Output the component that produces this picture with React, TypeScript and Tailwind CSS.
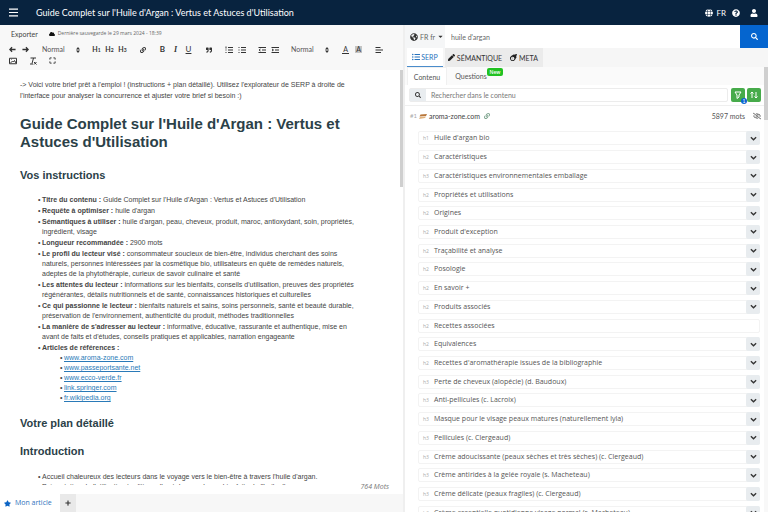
import { useState } from 'react';
import type { ReactNode } from 'react';
import {
  FaGlobe, FaQuestionCircle, FaUser, FaSearch, FaCloud, FaGlobeAmericas, FaCaretDown, FaListUl,
  FaPen, FaMeteor, FaStar, FaPlus, FaLink, FaQuoteRight, FaRegEyeSlash,
} from 'react-icons/fa';

const instructions = [
  ['Titre du contenu :', "Guide Complet sur l'Huile d'Argan : Vertus et Astuces d'Utilisation"],
  ['Requête à optimiser :', "huile d'argan"],
  ['Sémantiques à utiliser :', "huile d'argan, peau, cheveux, produit, maroc, antioxydant, soin, propriétés, ingrédient, visage"],
  ['Longueur recommandée :', '2900 mots'],
  ['Le profil du lecteur visé :', 'consommateur soucieux de bien-être, individus cherchant des soins naturels, personnes intéressées par la cosmétique bio, utilisateurs en quête de remèdes naturels, adeptes de la phytothérapie, curieux de savoir culinaire et santé'],
  ['Les attentes du lecteur :', "informations sur les bienfaits, conseils d'utilisation, preuves des propriétés régénérantes, détails nutritionnels et de santé, connaissances historiques et culturelles"],
  ['Ce qui passionne le lecteur :', "bienfaits naturels et sains, soins personnels, santé et beauté durable, préservation de l'environnement, authenticité du produit, méthodes traditionnelles"],
  ["La manière de s'adresser au lecteur :", "informative, éducative, rassurante et authentique, mise en avant de faits et d'études, conseils pratiques et applicables, narration engageante"],
];

const references = ['www.aroma-zone.com', 'www.passeportsante.net', 'www.ecco-verde.fr', 'link.springer.com', 'fr.wikipedia.org'];

const headings = [
  { level: 'h1', text: "Huile d'argan bio" },
  { level: 'h2', text: 'Caractéristiques' },
  { level: 'h3', text: 'Caractéristiques environnementales emballage' },
  { level: 'h2', text: 'Propriétés et utilisations' },
  { level: 'h2', text: 'Origines' },
  { level: 'h2', text: "Produit d'exception" },
  { level: 'h2', text: 'Traçabilité et analyse' },
  { level: 'h2', text: 'Posologie' },
  { level: 'h2', text: 'En savoir +' },
  { level: 'h2', text: 'Produits associés' },
  { level: 'h2', text: 'Recettes associées', leaf: true },
  { level: 'h2', text: 'Equivalences' },
  { level: 'h2', text: "Recettes d'aromathérapie issues de la bibliographie" },
  { level: 'h3', text: 'Perte de cheveux (alopécie) (d. Baudoux)' },
  { level: 'h3', text: 'Anti-pellicules (c. Lacroix)' },
  { level: 'h3', text: 'Masque pour le visage peaux matures (naturellement lyla)' },
  { level: 'h3', text: 'Pellicules (c. Clergeaud)' },
  { level: 'h3', text: 'Crème adoucissante (peaux sèches et très sèches) (c. Clergeaud)' },
  { level: 'h3', text: 'Crème antirides à la gelée royale (s. Macheteau)' },
  { level: 'h3', text: 'Crème délicate (peaux fragiles) (c. Clergeaud)' },
  { level: 'h3', text: 'Crème essentielle quotidienne visage normal (s. Macheteau)' },
];

// stroke icons on a 16 unit grid
function Glyph({ d, size = 'w-2 h-2', width = 2 }: { d: string; size?: string; width?: number }) {
  return (
    <svg viewBox="0 0 16 16" className={size} fill="none" stroke="currentColor" strokeWidth={width}>
      <path d={d} />
    </svg>
  );
}

function Tool({ label, children }: { label: string; children: ReactNode }) {
  return (
    <button aria-label={label} className="w-[13px] h-[11px] flex items-center justify-center">{children}</button>
  );
}

function SizePicker({ label }: { label: string }) {
  return (
    <div className="relative flex items-center w-11 h-[11px] pl-[3px]">
      <select aria-label={label} className="appearance-none w-full bg-transparent text-[7px] leading-[11px] text-[#555] outline-none">
        <option>Normal</option>
      </select>
      <svg viewBox="0 0 6 8" className="absolute right-0.5 w-1.5 h-2 pointer-events-none" fill="currentColor">
        <path d="M3 1 5 3.4H1ZM3 7 5 4.6H1Z" />
      </svg>
    </div>
  );
}

function Toolbar() {
  return (
    <div className="flex flex-wrap items-center gap-x-[7px] pl-1.5 text-[#333]">
      <div className="flex">
        <Tool label="Annuler"><Glyph d="M15 8H2M7 3 2 8l5 5" width={3} size="w-[7px] h-[7px]" /></Tool>
        <Tool label="Rétablir"><Glyph d="M1 8h13M9 3l5 5-5 5" width={3} size="w-[7px] h-[7px]" /></Tool>
      </div>
      <SizePicker label="Style" />
      <div className="flex">
        {['1', '2', '3'].map(n => (
          <Tool key={n} label={`Titre ${n}`}>
            <span className="text-[7px] font-bold">H<span className="text-[5px]">{n}</span></span>
          </Tool>
        ))}
      </div>
      <Tool label="Lien"><FaLink size={6} /></Tool>
      <div className="flex text-[8px] leading-[9px]">
        <Tool label="Gras"><b>B</b></Tool>
        <Tool label="Italique"><i className="font-['Liberation_Serif',serif] font-bold">I</i></Tool>
        <Tool label="Souligné"><u>U</u></Tool>
      </div>
      <Tool label="Citation"><FaQuoteRight size={6} /></Tool>
      <div className="flex">
        <Tool label="Liste numérotée"><Glyph d="M6 3h10M6 8h10M6 13h10M2 1v4M1 8h2M1 13h2" /></Tool>
        <Tool label="Liste à puces"><Glyph d="M6 3h10M6 8h10M6 13h10M1 3h2M1 8h2M1 13h2" /></Tool>
      </div>
      <div className="flex">
        <Tool label="Désindenter"><Glyph d="M1 3h15M8 8h8M1 13h15M5 6 2 8l3 2" /></Tool>
        <Tool label="Indenter"><Glyph d="M1 3h15M8 8h8M1 13h15M2 6l3 2-3 2" /></Tool>
      </div>
      <SizePicker label="Taille" />
      <div className="flex text-[7px] leading-[7px]">
        <Tool label="Couleur du texte"><span className="border-b border-[#333] px-px">A</span></Tool>
        <Tool label="Surlignage"><span className="bg-[#c4c4c4] px-px">A</span></Tool>
      </div>
      <Tool label="Alignement"><Glyph d="M1 3h10M1 8h15M1 13h11" /></Tool>
      <Tool label="Image"><Glyph d="M1 2.5h14v11H1zM3 12l4-4 2 2 2-3 3 5M5 5v1" /></Tool>
      <Tool label="Effacer le format"><Glyph d="M3 2h11M9 2 6 13M2 14h6M10 10l5 5M15 10l-5 5" /></Tool>
      <Tool label="Plein écran"><Glyph d="M2 6V2h4M10 2h4v4M14 10v4h-4M6 14H2v-4" size="w-[7px] h-[7px]" /></Tool>
    </div>
  );
}

function Editor() {
  return (
    <section className="flex flex-col min-h-0 min-w-0 bg-white border-r-2 border-[#efefef]">
      <div className="h-[45px] shrink-0 bg-[#f8f8f8] pt-[3px]">
        <div className="flex items-center gap-[11px] pl-[11px] h-3 mb-1">
          <button className="text-[7px] text-[#444]">Exporter</button>
          <p className="flex items-center gap-[3px] font-['Open_Sans',sans-serif] text-[5px] text-[#666]">
            <FaCloud size={6} color="#111" />Dernière sauvegarde le 29 mars 2024 - 18:39
          </p>
        </div>
        <Toolbar />
      </div>

      <div className="relative flex flex-1 min-h-0 pb-[9px]">
        <article className="flex-1 overflow-hidden pl-5 pr-8 pt-[9px] font-['Liberation_Sans',sans-serif] text-[7px] leading-[10px] text-[#444]">
          <p className="leading-[11px]">-&gt; Voici votre brief prêt à l'emploi ! (instructions + plan détaillé). Utilisez l'explorateur de SERP à droite de l'interface pour analyser la concurrence et ajuster votre brief si besoin :)</p>
          <h1 className="text-[15px] leading-[18px] font-bold text-[#2b4148] mt-3.5">Guide Complet sur l'Huile d'Argan : Vertus et Astuces d'Utilisation</h1>
          <h2 className="text-[11px] leading-4 font-bold text-[#2b4148] mt-4">Vos instructions</h2>
          <ul className="mt-3 pl-[22px] pr-1 space-y-px">
            {instructions.map(([title, text]) => (
              <li key={title} className="before:content-['•'] before:-ml-1 before:inline-block before:w-1"><b>{title}</b> {text}</li>
            ))}
            <li className="before:content-['•'] before:-ml-1 before:inline-block before:w-1">
              <b>Articles de références :</b>
              <ul className="pl-[22px]">
                {references.map(site => (
                  <li key={site} className="before:content-['•'] before:-ml-1 before:inline-block before:w-1">
                    <a href={`https://${site}`} className="text-[#2a7ab8] underline">{site}</a>
                  </li>
                ))}
              </ul>
            </li>
          </ul>
          <h2 className="text-[11px] leading-4 font-bold text-[#2b4148] mt-3">Votre plan détaillé</h2>
          <h2 className="text-[11px] leading-4 font-bold text-[#2b4148] mt-3">Introduction</h2>
          <ul className="mt-[13px] pl-[22px]">
            <li className="before:content-['•'] before:-ml-1 before:inline-block before:w-1">Accueil chaleureux des lecteurs dans le voyage vers le bien-être à travers l'huile d'argan.</li>
            <li className="before:content-['•'] before:-ml-1 before:inline-block before:w-1">Présentation de l'utilisation traditionnelle et des nombreux bienfaits de l'huile d'argan.</li>
          </ul>
        </article>
        <div className="w-[3px] h-[117px] bg-[#cfcfcf]" />
        <p className="absolute right-3.5 bottom-0.5 font-['Open_Sans',sans-serif] italic text-[7px] leading-[10px] text-[#777]">764 Mots</p>
      </div>

      <footer className="h-[18px] shrink-0 flex bg-[#f7f7f7] font-['Open_Sans',sans-serif] text-[7px]">
        <button className="flex items-center gap-1 pl-1 pr-2 bg-white text-[#2f74bd]">
          <FaStar size={7} color="#0a63c4" />Mon article
        </button>
        <button aria-label="Ajouter" className="w-4 flex items-center justify-center bg-[#e9e9e9] text-[#333]"><FaPlus size={6} /></button>
      </footer>
    </section>
  );
}

function Results() {
  const [query, setQuery] = useState("huile d'argan");
  const [filter, setFilter] = useState('');

  return (
    <section className="flex flex-col min-h-0 min-w-0 text-[7px] leading-[10px]">
      {/* Search bar */}
      <div className="flex h-[23px] shrink-0">
        <button className="w-10 flex items-center pl-[5px] gap-0.5 bg-[#f5f6f7] text-[#666]">
          <FaGlobeAmericas size={8} color="#333" />
          <span>FR fr</span>
          <FaCaretDown size={7} color="#333" />
        </button>
        <input
          aria-label="Requête" value={query} onChange={e => setQuery(e.target.value)}
          className="flex-1 min-w-0 pl-1.5 text-[#666] outline-none"
        />
        <button aria-label="Rechercher" className="w-7 flex items-center justify-center bg-[#0565cf] text-white"><FaSearch size={7} /></button>
      </div>

      {/* Tabs */}
      <nav className="flex h-[19px] shrink-0 pl-0.5 bg-[#f6f6f6] text-[#333]">
        <button className="w-9 flex items-center justify-center gap-px bg-white border-b border-[#4a8ccb] text-[#2672bd]"><FaListUl size={8} />SERP</button>
        <button className="w-[60px] flex items-center justify-center gap-0.5 bg-[#ebebeb] ml-0.5"><FaPen size={7} color="#222" />SÉMANTIQUE</button>
        <button className="w-[38px] flex items-center justify-center gap-0.5 bg-[#ebebeb]"><FaMeteor size={7} color="#222" />META</button>
      </nav>

      <div className="flex flex-1 min-h-0">
        <div className="flex flex-1 min-w-0 flex-col overflow-hidden">
          <div className="flex h-[18px] shrink-0 pl-0.5 bg-[#fafafa] text-[#555]">
            <button className="w-10 bg-white border-x border-t border-[#f0f0f0]">Contenu</button>
            <button className="relative w-12">
              Questions
              <span className="absolute left-10 top-px w-4 h-2 rounded-xs bg-[#21c121] font-['Open_Sans',sans-serif] text-[5px] leading-2 font-semibold text-white">New</span>
            </button>
          </div>

          <div className="flex h-[21px] shrink-0 items-center gap-0.5 pl-1 pr-[3px] border-b border-[#efefef]">
            <div className="flex flex-1 min-w-0 h-3.5 mr-px border border-[#ececec] rounded-xs">
              <span className="w-4 flex items-center justify-center bg-[#e9edf0] text-[#333]"><FaSearch size={6} /></span>
              <input
                aria-label="Rechercher dans le contenu" placeholder="Rechercher dans le contenu" value={filter}
                onChange={e => setFilter(e.target.value)}
                className="flex-1 min-w-0 pl-[5px] outline-none placeholder:text-[#777]"
              />
            </div>
            <button aria-label="Filtrer" className="relative w-3.5 h-3.5 flex items-center justify-center rounded-xs bg-[#47ab4b] text-white">
              <Glyph d="M2 2h12L10 8v4l-4 3V8Z" />
              <span className="absolute -right-0.5 -bottom-0.5 w-1.5 h-1.5 rounded-full bg-[#0a63d0] text-[5px] leading-[6px]">1</span>
            </button>
            <button aria-label="Trier" className="w-3.5 h-3.5 flex items-center justify-center rounded-xs bg-[#47ab4b] text-white">
              <Glyph d="M4 14V2M1 5l3-3 3 3M12 2v12M9 11l3 3 3-3" />
            </button>
          </div>

          <div className="flex h-5 shrink-0 items-center pl-[5px] pr-[3px] text-[#444]">
            <span className="w-[9px] text-[6px] text-[#aaa]">#1</span>
            <svg viewBox="0 0 16 10" className="w-2 h-[5px] mr-0.5">
              <path d="M3 1 16 0 14 4 1 5Z" fill="#b8763a" />
              <path d="M2 6 14 5 12 8 0 10Z" fill="#e0b27d" />
            </svg>
            <a href="https://www.aroma-zone.com">aroma-zone.com</a>
            <FaLink size={6} color="#7ea58f" className="ml-1" />
            <span className="ml-auto mr-2 text-[#555]">5897 mots</span>
            <button aria-label="Masquer"><FaRegEyeSlash size={8} /></button>
          </div>

          <ul className="flex flex-1 flex-col pt-[3px] pl-[13px] pr-1 -mb-2.5 font-['Open_Sans',sans-serif] text-[#555]">
            {headings.map(heading => (
              <li key={heading.text} className="flex flex-1 items-center">
                <div className="flex flex-1 min-w-0 h-3.5 items-center border border-[#f3f3f3] rounded-xs">
                  <span className="w-[11px] ml-1 text-[5px] text-[#aaa]">{heading.level}</span>
                  <span className="flex-1">{heading.text}</span>
                  {!heading.leaf && (
                    <button aria-label={`Ouvrir ${heading.text}`} className="w-3.5 h-3.5 -my-px -mr-px flex items-center justify-center rounded-xs bg-[#e8ecef] text-[#333]">
                      <Glyph d="M2 5l6 6 6-6" size="w-[7px] h-[7px]" width={3} />
                    </button>
                  )}
                </div>
              </li>
            ))}
          </ul>
        </div>
        <div className="w-1 bg-[#f8f8f8]"><div className="h-[53px] bg-[#cfcfcf]" /></div>
      </div>
    </section>
  );
}

export default function App() {
  return (
    <main className="h-screen flex flex-col overflow-hidden bg-white font-['Lato',sans-serif] text-[#555]">
      <header className="h-[25px] shrink-0 bg-[#08233f] text-white flex items-center pl-[9px] pr-2.5">
        <button aria-label="Menu"><Glyph d="M0 2h16M0 8h16M0 14h16" size="w-[9px] h-[9px]" /></button>
        <h1 className="text-[9px] leading-3 ml-[18px]">Guide Complet sur l'Huile d'Argan : Vertus et Astuces d'Utilisation</h1>
        <div className="ml-auto flex items-center text-[8px]">
          <button className="flex items-center gap-[3px] mr-1.5"><FaGlobe size={8} />FR</button>
          <button aria-label="Aide" className="mr-2.5"><FaQuestionCircle size={8} /></button>
          <button aria-label="Compte"><FaUser size={8} /></button>
        </div>
      </header>
      <div className="flex-1 min-h-0 grid grid-cols-[405fr_363fr]">
        <Editor />
        <Results />
      </div>
    </main>
  );
}
